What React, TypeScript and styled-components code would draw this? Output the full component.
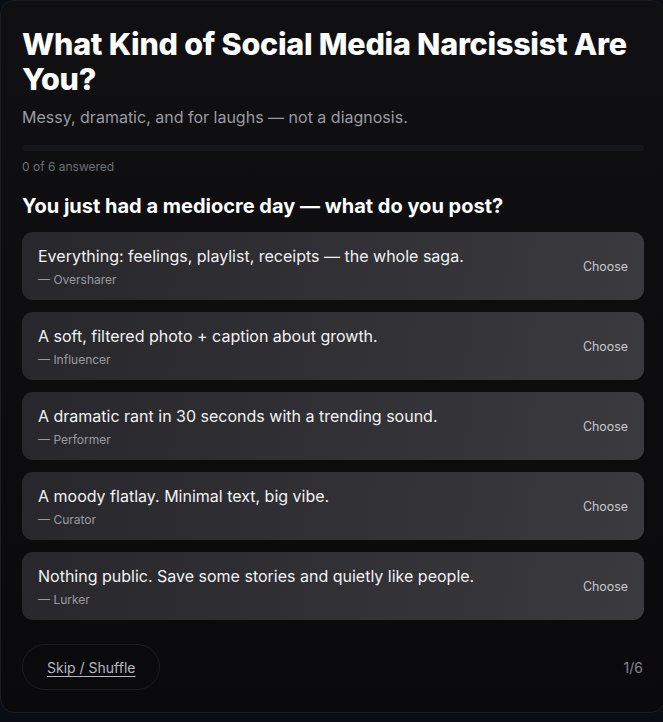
import React from "react";
import styled, { createGlobalStyle } from "styled-components";

const Global = createGlobalStyle`
  html, body { margin: 0; padding: 0; background: #0a0d14; }
  body { font-family: Inter, "Noto Sans", sans-serif; -webkit-font-smoothing: antialiased; }
  * { box-sizing: border-box; }
`;

const Card = styled.main`
  width: 665px;
  min-height: 713px;
  background: linear-gradient(180deg, #101013 0%, #0a0a0d 100%);
  border: 1px solid #1b1d24;
  border-radius: 14px;
  padding: 25px 20px 22px 21px;
  display: flex;
  flex-direction: column;
`;

const Title = styled.h1`
  margin: 0;
  font-size: 30.5px;
  line-height: 35px;
  font-weight: 800;
  color: #ffffff;
  letter-spacing: -0.25px;
`;

const Subtitle = styled.p`
  margin: 10px 0 0;
  font-size: 16px;
  line-height: 22px;
  color: #9b9ba3;
`;

const Track = styled.div`
  margin-top: 17px;
  height: 6px;
  border-radius: 3px;
  background: #16171b;
`;

const Count = styled.div`
  margin-top: 8px;
  font-size: 12px;
  line-height: 16px;
  color: #6e6e76;
`;

const Question = styled.h2`
  margin: 18px 0 0;
  font-size: 20px;
  line-height: 26px;
  font-weight: 700;
  color: #ffffff;
`;

const Options = styled.div`
  margin-top: 13px;
  display: flex;
  flex-direction: column;
  gap: 12px;
`;

const Option = styled.button`
  all: unset;
  box-sizing: border-box;
  height: 68px;
  border-radius: 11px;
  background: linear-gradient(100deg, #28282c 0%, #303035 50%, #3a3a3f 100%);
  padding: 0 16px;
  display: flex;
  align-items: center;
  justify-content: space-between;
  cursor: pointer;
`;

const OptionText = styled.div`
  display: flex;
  flex-direction: column;
  gap: 6px;
`;

const Main = styled.span`
  font-size: 16px;
  line-height: 20px;
  color: #f2f2f4;
`;

const Tag = styled.span`
  font-size: 12px;
  line-height: 15px;
  color: #9a9aa2;
`;

const Choose = styled.span`
  font-size: 12.4px;
  color: #c9c9cf;
`;

const Footer = styled.div`
  margin-top: 24px;
  display: flex;
  align-items: center;
  justify-content: space-between;
`;

const Skip = styled.button`
  all: unset;
  box-sizing: border-box;
  height: 46px;
  padding: 0 24px;
  border-radius: 23px;
  border: 1px solid #1d1e23;
  font-size: 14px;
  color: #b7b7c0;
  text-decoration: underline;
  text-underline-offset: 3px;
  display: flex;
  align-items: center;
  cursor: pointer;
`;

const Step = styled.span`
  font-size: 14px;
  color: #85858d;
  margin-right: 1px;
`;

const options = [
  ["Everything: feelings, playlist, receipts — the whole saga.", "Oversharer"],
  ["A soft, filtered photo + caption about growth.", "Influencer"],
  ["A dramatic rant in 30 seconds with a trending sound.", "Performer"],
  ["A moody flatlay. Minimal text, big vibe.", "Curator"],
  ["Nothing public. Save some stories and quietly like people.", "Lurker"],
];

export default function App() {
  return (
    <>
      <Global />
      <Card>
        <Title>What Kind of Social Media Narcissist Are You?</Title>
        <Subtitle>Messy, dramatic, and for laughs — not a diagnosis.</Subtitle>
        <Track />
        <Count>0 of 6 answered</Count>
        <Question>You just had a mediocre day — what do you post?</Question>
        <Options>
          {options.map(([text, tag]) => (
            <Option key={tag}>
              <OptionText>
                <Main>{text}</Main>
                <Tag>— {tag}</Tag>
              </OptionText>
              <Choose>Choose</Choose>
            </Option>
          ))}
        </Options>
        <Footer>
          <Skip>Skip / Shuffle</Skip>
          <Step>1/6</Step>
        </Footer>
      </Card>
    </>
  );
}
